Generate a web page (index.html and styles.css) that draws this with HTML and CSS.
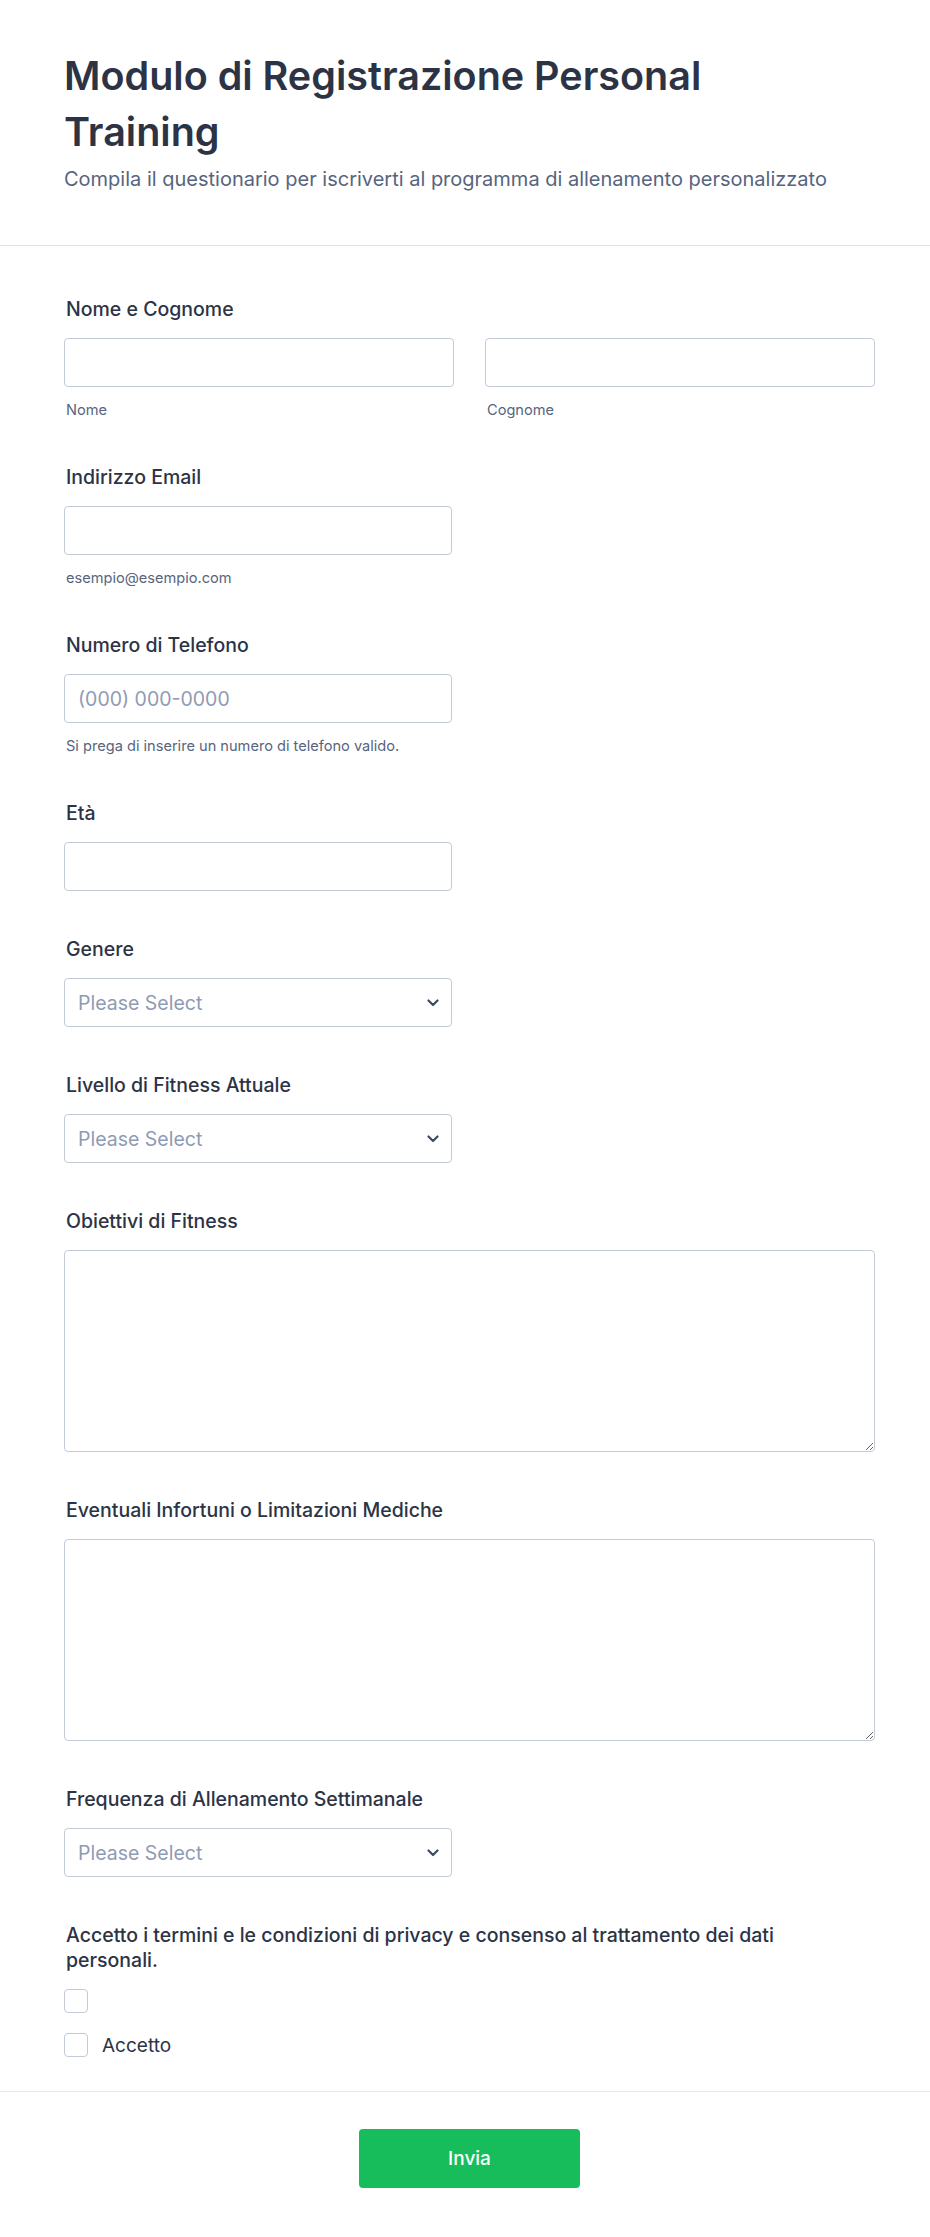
FILE: index.html
```html
<!DOCTYPE html>
<html lang="it">
<head>
<meta charset="utf-8">
<title>Modulo di Registrazione Personal Training</title>
<link rel="stylesheet" href="styles.css">
</head>
<body>
<div class="page">
  <header class="form-header">
    <h1 class="form-title">Modulo di Registrazione Personal Training</h1>
    <p class="form-subtitle">Compila il questionario per iscriverti al programma di allenamento personalizzato</p>
  </header>

  <form class="form-body">
    <div class="field">
      <label class="label">Nome e Cognome</label>
      <div class="name-row">
        <div class="name-col">
          <input class="input" type="text">
          <span class="sublabel">Nome</span>
        </div>
        <div class="name-col">
          <input class="input" type="text">
          <span class="sublabel">Cognome</span>
        </div>
      </div>
    </div>

    <div class="field">
      <label class="label">Indirizzo Email</label>
      <input class="input input-half" type="email">
      <span class="sublabel">esempio@esempio.com</span>
    </div>

    <div class="field">
      <label class="label">Numero di Telefono</label>
      <input class="input input-half" type="tel" placeholder="(000) 000-0000">
      <span class="sublabel">Si prega di inserire un numero di telefono valido.</span>
    </div>

    <div class="field">
      <label class="label">Età</label>
      <input class="input input-half" type="text">
    </div>

    <div class="field">
      <label class="label">Genere</label>
      <div class="select-wrap">
        <select class="select"><option>Please Select</option></select>
        <svg class="chevron" viewBox="0 0 12 8" width="12" height="8"><path d="M1.5 1.5 6 6l4.5-4.5" fill="none" stroke="currentColor" stroke-width="2.2" stroke-linecap="round" stroke-linejoin="round"/></svg>
      </div>
    </div>

    <div class="field">
      <label class="label">Livello di Fitness Attuale</label>
      <div class="select-wrap">
        <select class="select"><option>Please Select</option></select>
        <svg class="chevron" viewBox="0 0 12 8" width="12" height="8"><path d="M1.5 1.5 6 6l4.5-4.5" fill="none" stroke="currentColor" stroke-width="2.2" stroke-linecap="round" stroke-linejoin="round"/></svg>
      </div>
    </div>

    <div class="field">
      <label class="label">Obiettivi di Fitness</label>
      <textarea class="textarea"></textarea>
    </div>

    <div class="field">
      <label class="label">Eventuali Infortuni o Limitazioni Mediche</label>
      <textarea class="textarea"></textarea>
    </div>

    <div class="field">
      <label class="label">Frequenza di Allenamento Settimanale</label>
      <div class="select-wrap">
        <select class="select"><option>Please Select</option></select>
        <svg class="chevron" viewBox="0 0 12 8" width="12" height="8"><path d="M1.5 1.5 6 6l4.5-4.5" fill="none" stroke="currentColor" stroke-width="2.2" stroke-linecap="round" stroke-linejoin="round"/></svg>
      </div>
    </div>

    <div class="field">
      <label class="label label-wide">Accetto i termini e le condizioni di privacy e consenso al trattamento dei dati personali.</label>
      <div class="checks">
        <label class="check"><input class="checkbox" type="checkbox"></label>
        <label class="check"><input class="checkbox" type="checkbox"><span class="check-text">Accetto</span></label>
      </div>
    </div>
  </form>

  <footer class="form-footer">
    <button class="submit" type="button">Invia</button>
  </footer>
</div>
</body>
</html>
```

FILE: styles.css
```css
* { box-sizing: border-box; }

html, body {
  margin: 0;
  padding: 0;
  background: #ffffff;
}

body {
  font-family: Inter, "Noto Sans", "Liberation Sans", sans-serif;
  color: #2c3345;
}

.page {
  width: 930px;
}

.form-header {
  padding: 48px 64px 52px 64px;
  border-bottom: 1px solid #dfe2e8;
}

.form-title {
  margin: 0;
  font-size: 39.5px;
  line-height: 56px;
  font-weight: 600;
  color: #2c3345;
  max-width: 720px;
}

.form-subtitle {
  margin: 6px 0 0 0;
  font-size: 20px;
  line-height: 27px;
  color: #57647e;
}

.form-body {
  padding: 51px 55px 34px 64px;
  display: flex;
  flex-direction: column;
  gap: 46px;
}

.field {
  display: flex;
  flex-direction: column;
  align-items: flex-start;
}

.label {
  display: block;
  padding-left: 2px;
  font-size: 19.5px;
  line-height: 25px;
  font-weight: 500;
  color: #2c3345;
  margin-bottom: 16px;
}

.label-wide {
  max-width: 760px;
}

.name-row {
  display: grid;
  grid-template-columns: 390px 390px;
  column-gap: 31px;
}

.name-col {
  display: flex;
  flex-direction: column;
}

.input {
  display: block;
  width: 390px;
  height: 49px;
  border: 1px solid #c3cad8;
  border-radius: 4px;
  padding: 0 13px;
  font-family: inherit;
  font-size: 19.5px;
  color: #2c3345;
  background: #fff;
  outline: none;
}

.input-half {
  width: 388px;
}

.input::placeholder {
  color: #8f9bb3;
}

.sublabel {
  display: block;
  margin-top: 14px;
  padding-left: 2px;
  font-size: 14.6px;
  line-height: 18px;
  color: #57647e;
}

.select-wrap {
  position: relative;
  width: 388px;
  height: 49px;
}

.select {
  appearance: none;
  -webkit-appearance: none;
  width: 100%;
  height: 100%;
  border: 1px solid #c3cad8;
  border-radius: 4px;
  padding: 0 40px 0 13px;
  font-family: inherit;
  font-size: 19.5px;
  color: #8f9bb3;
  background: #fff;
  outline: none;
}

.chevron {
  position: absolute;
  right: 13px;
  top: 21px;
  color: #3d4a63;
  pointer-events: none;
}

.textarea {
  display: block;
  width: 811px;
  height: 202px;
  border: 1px solid #c3cad8;
  border-radius: 4px;
  padding: 12px 13px;
  font-family: inherit;
  font-size: 19.5px;
  color: #2c3345;
  background: #fff;
  outline: none;
  resize: vertical;
}

.checks {
  display: flex;
  flex-direction: column;
  gap: 20px;
}

.check {
  display: flex;
  align-items: center;
  gap: 14px;
  height: 24px;
}

.checkbox {
  appearance: none;
  -webkit-appearance: none;
  margin: 0;
  width: 24px;
  height: 24px;
  border: 1px solid #c3cad8;
  border-radius: 4px;
  background: #fff;
}

.check-text {
  font-size: 19px;
  line-height: 25px;
  color: #2c3345;
}

.form-footer {
  border-top: 1px solid #e3e7ee;
  padding: 37px 55px 50px 64px;
  display: flex;
  justify-content: center;
}

.submit {
  width: 221px;
  height: 59px;
  border: none;
  border-radius: 4px;
  background: #18bd5b;
  color: #ffffff;
  font-family: inherit;
  font-size: 19px;
  font-weight: 500;
}
```
